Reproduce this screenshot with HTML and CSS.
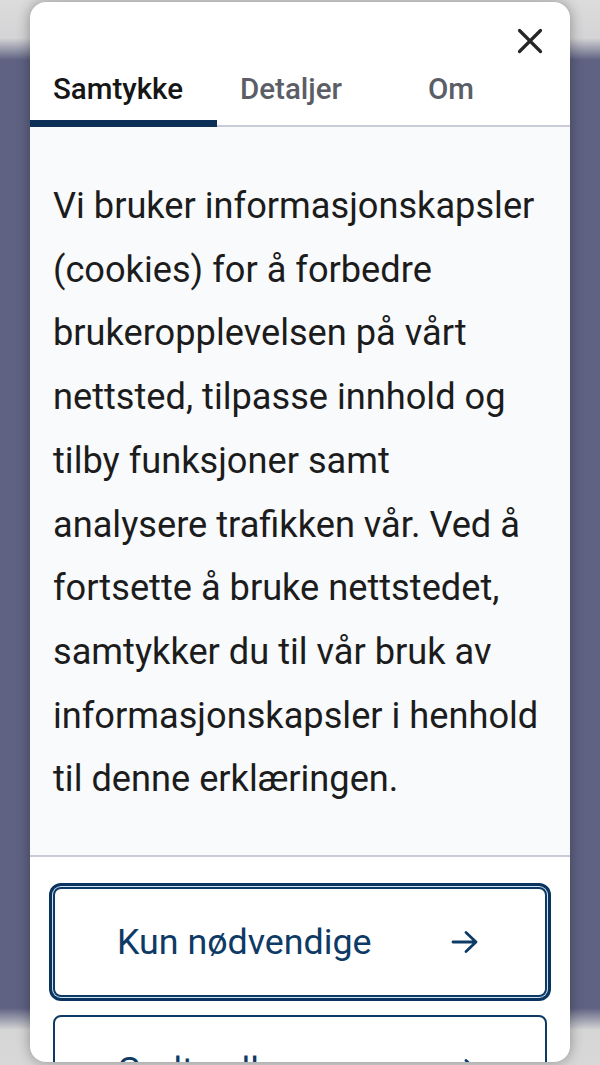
FILE: index.html
```html
<!DOCTYPE html>
<html lang="no">
<head>
<meta charset="utf-8">
<link rel="stylesheet" href="styles.css">
</head>
<body>
<div class="modal">
  <div class="header">
    <button class="close" aria-label="Lukk">
      <svg width="26" height="26" viewBox="0 0 26 26"><path d="M2.5 2.5 L23.5 23.5 M23.5 2.5 L2.5 23.5" stroke="#262626" stroke-width="3.2" stroke-linecap="round"/></svg>
    </button>
    <div class="tabs">
      <div class="tab active">Samtykke</div>
      <div class="tab">Detaljer</div>
      <div class="tab">Om</div>
    </div>
  </div>
  <div class="body">
    <p>Vi bruker informasjonskapsler<br>(cookies) for å forbedre<br>brukeropplevelsen på vårt<br>nettsted, tilpasse innhold og<br>tilby funksjoner samt<br>analysere trafikken vår. Ved å<br>fortsette å bruke nettstedet,<br>samtykker du til vår bruk av<br>informasjonskapsler i henhold<br>til denne erklæringen.</p>
  </div>
  <div class="footer">
    <button class="btn focus"><span>Kun nødvendige</span><svg class="arrow" width="28" height="24" viewBox="0 0 28 24"><path d="M2 12 H25 M15 2.5 L25 12 L15 21.5" fill="none" stroke="#0e3a66" stroke-width="2.8" stroke-linecap="round" stroke-linejoin="round"/></svg></button>
    <button class="btn"><span>Godta alle</span><svg class="arrow" width="28" height="24" viewBox="0 0 28 24"><path d="M2 12 H25 M15 2.5 L25 12 L15 21.5" fill="none" stroke="#0e3a66" stroke-width="2.8" stroke-linecap="round" stroke-linejoin="round"/></svg></button>
  </div>
</div>
</body>
</html>
```
FILE: styles.css
```css
html, body { margin: 0; padding: 0; }
body {
  width: 600px;
  height: 1065px;
  overflow: hidden;
  font-family: Roboto, "Liberation Sans", sans-serif;
  background: linear-gradient(to bottom, #dcdcdc 0px, #d4d4d6 38px, #5f6282 60px, #5f6282 1008px, #d6d6d6 1030px, #d8d8d8 1065px);
}
.modal {
  margin: 2px 30px 0;
  width: 540px;
  height: 1060px;
  background: #fff;
  border-radius: 16px;
  overflow: hidden;
  box-shadow: 0 0 14px rgba(0,0,0,0.35);
  display: flex;
  flex-direction: column;
}
.header {
  display: flex;
  flex-direction: column;
  border-bottom: 2px solid #c9ccd8;
  flex-shrink: 0;
}
.close {
  align-self: flex-end;
  margin: 26px 27px 0 0;
  background: none;
  border: 0;
  padding: 0;
  width: 26px;
  height: 26px;
  display: flex;
}
.tabs {
  display: flex;
  margin-bottom: -2px;
}
.tab {
  flex: 0 0 187px;
  box-sizing: border-box;
  padding: 6px 0 2px 23px;
  line-height: 58px;
  font-size: 29.5px;
  font-weight: 500;
  color: #5b5e66;
  border-bottom: 7px solid transparent;
}
.tab.active {
  color: #161616;
  border-bottom-color: #0b2f57;
}
.tab:last-child { padding-left: 24px; }
.body {
  flex-shrink: 0;
  box-sizing: border-box;
  background: #f8fafc;
  height: 730px;
  border-bottom: 2px solid #c9ccd8;
  padding: 47px 23px 0;
}
.body p {
  margin: 0;
  font-size: 36.2px;
  line-height: 63.7px;
  color: #1c1c1c;
  white-space: nowrap;
}
.footer {
  flex-shrink: 0;
  padding: 30px 23px 0;
  display: flex;
  flex-direction: column;
  gap: 18px;
}
.btn {
  flex-shrink: 0;
  height: 110px;
  background: #fff;
  border: 2px solid #0e3a66;
  border-radius: 8px;
  display: flex;
  align-items: center;
  justify-content: space-between;
  font-family: inherit;
  font-size: 35.8px;
  color: #0e3a66;
  padding: 0 66px 0 62px;
}
.btn.focus {
  box-shadow: 0 0 0 1px #cfe0f2, 0 0 0 4px #0b3360;
}
.arrow { display: block; }
```
